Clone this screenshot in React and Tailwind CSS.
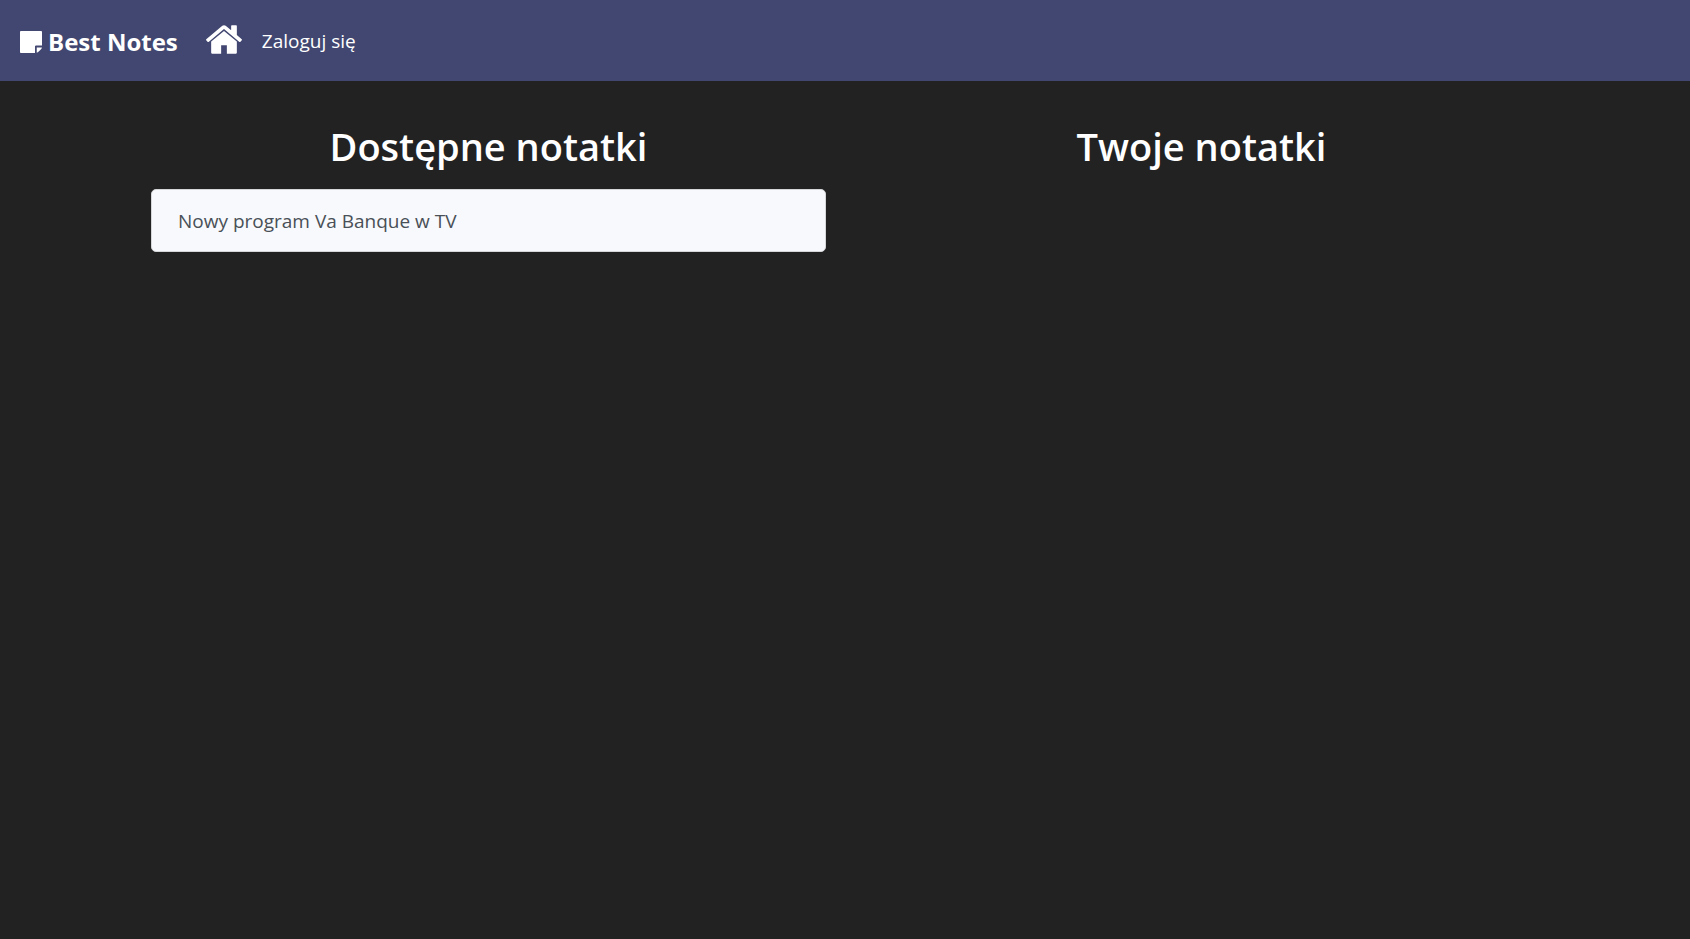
function NoteIcon() {
  return (
    <svg viewBox="0 0 1536 1536" className="size-[22px]" fill="currentColor" aria-hidden="true">
      <path d="M1047 1084v452H64q-27 0-45-19t-19-45V64q0-27 19-45t45-19h1408q27 0 45 19t19 45v948h-417q-30 0-51 21t-21 51zM1170 1152h363q-15 72-65 122l-180 180q-46 46-118 72z" />
    </svg>
  );
}

function HomeIcon() {
  return (
    <svg viewBox="25 253 1614 1283" className="h-[29px] w-[36px]" fill="currentColor" aria-hidden="true">
      <path d="M1408 992v480q0 26-19 45t-45 19H960v-384H704v384H320q-26 0-45-19t-19-45V992q0-1 .5-3t.5-3l575-474 575 474q1 2 1 6zm223-69l-62 74q-8 9-21 11h-3q-13 0-21-7L832 424l-692 577q-12 8-24 7-13-2-21-11l-62-74q-8-10-7-23.5t11-21.5l719-599q32-26 76-26t76 26l244 204V288q0-14 9-23t23-9h192q14 0 23 9t9 23v408l219 182q10 8 11 21.5t-7 23.5z" />
    </svg>
  );
}

const notes = ["Nowy program Va Banque w TV"];

export default function App() {
  return (
    <div className="min-h-screen bg-[#222222] font-['Open_Sans','Noto_Sans',sans-serif] text-white">
      <nav className="flex h-[81px] items-center bg-[#414770] px-5 pt-[2px]">
        <a href="#" className="flex items-center gap-[6px] text-2xl font-bold">
          <NoteIcon />
          <span>Best Notes</span>
        </a>
        <a href="#" aria-label="Strona główna" className="ml-7 pb-1">
          <HomeIcon />
        </a>
        <a href="#" className="ml-5 text-[19px]">Zaloguj się</a>
      </nav>
      <main className="mx-auto grid max-w-[1426px] grid-cols-2 pt-[41px]">
        <section className="px-[19px]">
          <h1 className="mb-[19px] text-center text-[38px] leading-[48px] font-semibold">Dostępne notatki</h1>
          <ul className="flex flex-col">
            {notes.map((note) => (
              <li key={note}>
                <a href="#" className="block rounded-[5px] border border-[#d6d7d9] bg-[#f8f9fc] px-[26px] pt-[17px] pb-[15px] text-[19px] leading-[29px] text-[#495057]">
                  {note}
                </a>
              </li>
            ))}
          </ul>
        </section>
        <section className="px-[19px]">
          <h1 className="mb-[19px] text-center text-[38px] leading-[48px] font-semibold">Twoje notatki</h1>
        </section>
      </main>
    </div>
  );
}
